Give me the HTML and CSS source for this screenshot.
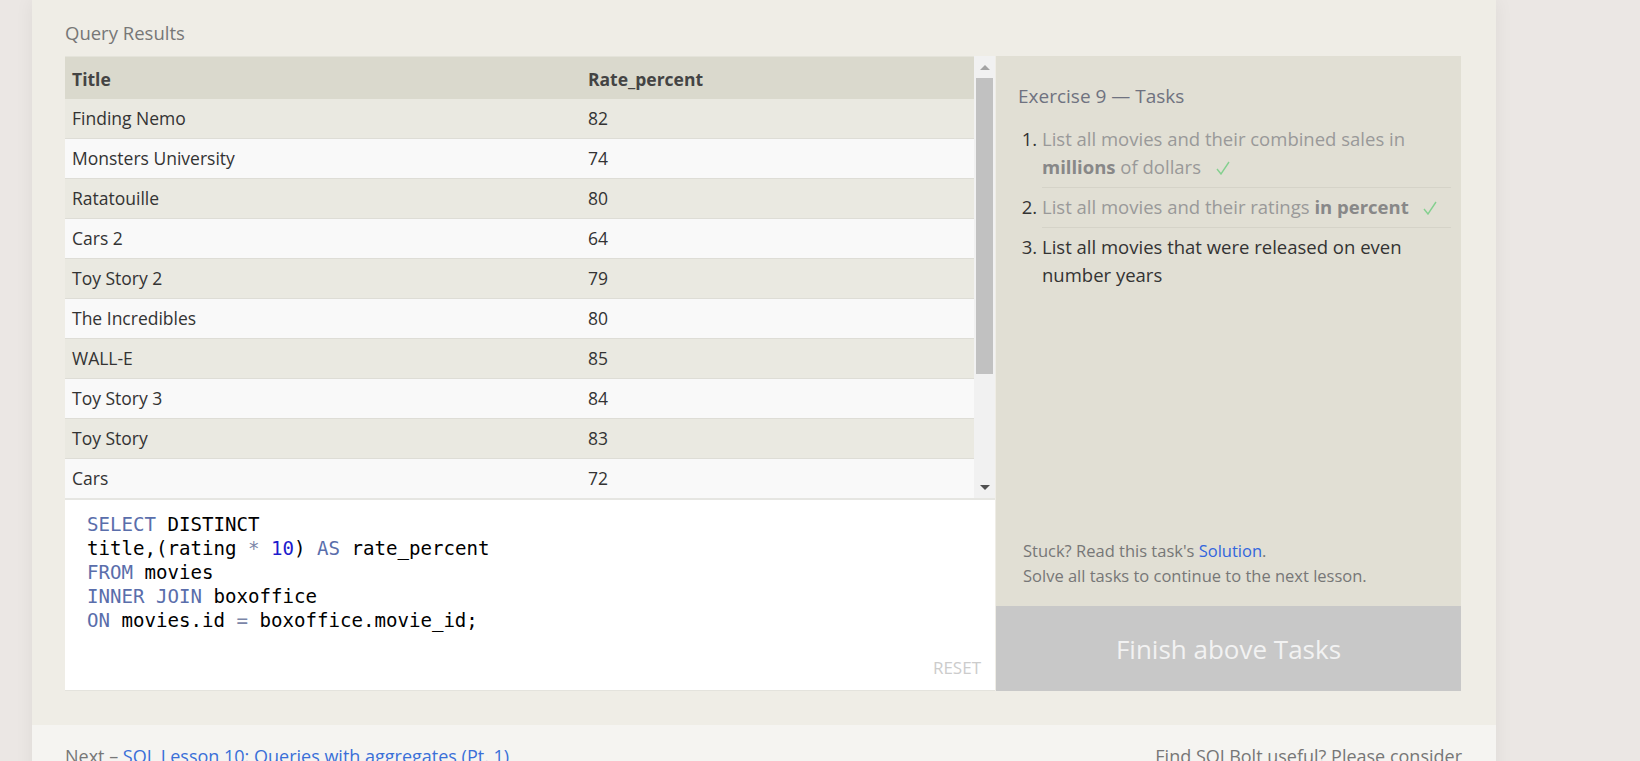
FILE: index.html
```html
<!DOCTYPE html>
<html lang="en">
<head>
<meta charset="utf-8">
<title>SQLBolt - Exercise 9</title>
<link rel="stylesheet" href="styles.css">
</head>
<body>
<div class="page">
  <section class="main">
    <h2 class="results-title">Query Results</h2>
    <div class="workspace">
      <div class="left-col">
        <div class="results">
          <div class="table-wrap">
            <table class="results-table">
              <colgroup><col class="col-title"><col></colgroup>
              <thead>
                <tr><th>Title</th><th>Rate_percent</th></tr>
              </thead>
              <tbody>
                <tr><td>Finding Nemo</td><td>82</td></tr>
                <tr><td>Monsters University</td><td>74</td></tr>
                <tr><td>Ratatouille</td><td>80</td></tr>
                <tr><td>Cars 2</td><td>64</td></tr>
                <tr><td>Toy Story 2</td><td>79</td></tr>
                <tr><td>The Incredibles</td><td>80</td></tr>
                <tr><td>WALL-E</td><td>85</td></tr>
                <tr><td>Toy Story 3</td><td>84</td></tr>
                <tr><td>Toy Story</td><td>83</td></tr>
                <tr><td>Cars</td><td>72</td></tr>
              </tbody>
            </table>
          </div>
          <div class="scrollbar">
            <div class="sb-btn"><span class="arrow-up"></span></div>
            <div class="sb-track"><div class="sb-thumb"></div></div>
            <div class="sb-btn"><span class="arrow-down"></span></div>
          </div>
        </div>
        <div class="editor">
<pre class="code"><span class="kw">SELECT</span> DISTINCT
title,(rating <span class="op">*</span> <span class="num">10</span>) <span class="kw">AS</span> rate_percent
<span class="kw">FROM</span> movies
<span class="kw">INNER JOIN</span> boxoffice
<span class="kw">ON</span> movies.id <span class="op">=</span> boxoffice.movie_id;</pre>
          <div class="editor-foot"><span class="reset">RESET</span></div>
        </div>
      </div>
      <aside class="tasks-panel">
        <div class="tasks">
          <h3 class="tasks-title">Exercise 9 — Tasks</h3>
          <ol class="task-list">
            <li class="done">List all movies and their combined sales in <b>millions</b> of dollars <svg class="check" width="14" height="14" viewBox="0 0 14 14"><polyline points="1,8 5,13 13,1" fill="none" stroke="#84d08f" stroke-width="1.4"/></svg></li>
            <li class="done">List all movies and their ratings <b>in percent</b> <svg class="check" width="14" height="14" viewBox="0 0 14 14"><polyline points="1,8 5,13 13,1" fill="none" stroke="#84d08f" stroke-width="1.4"/></svg></li>
            <li class="current">List all movies that were released on even number years</li>
          </ol>
        </div>
        <div class="hint">
          <p>Stuck? Read this task's <a href="#">Solution</a>.</p>
          <p>Solve all tasks to continue to the next lesson.</p>
        </div>
        <div class="finish">Finish above Tasks</div>
      </aside>
    </div>
  </section>
  <footer class="footer">
    <p class="next">Next – <a href="#">SQL Lesson 10: Queries with aggregates (Pt. 1)</a></p>
    <p class="support">Find SQLBolt useful? Please consider</p>
  </footer>
</div>
</body>
</html>
```

FILE: styles.css
```css
html, body {
  margin: 0;
  padding: 0;
}
body {
  background: #ebe7e4;
  font-family: "Open Sans", "Liberation Sans", sans-serif;
  color: #333;
  height: 761px;
  overflow: hidden;
}
.page {
  width: 1464px;
  margin-left: 32px;
  box-shadow: 0 0 18px rgba(0, 0, 0, 0.06);
}
.main {
  background: #efede6;
  padding: 0 35px 34px 33px;
}
.results-title {
  margin: 0;
  padding: 21px 0 11px;
  font-size: 18.5px;
  line-height: 24px;
  font-weight: normal;
  color: #777;
}
.workspace {
  display: flex;
  gap: 1px;
  height: 635px;
}
.left-col {
  width: 930px;
  display: flex;
  flex-direction: column;
}
.results {
  display: flex;
  height: 442px;
  border-bottom: 2px solid #e6e6e2;
}
.table-wrap {
  width: 909px;
  overflow: hidden;
  background: #f9f9f9;
}
.results-table {
  width: 100%;
  border-collapse: separate;
  border-spacing: 0;
  table-layout: fixed;
  font-size: 17.5px;
  line-height: 23px;
}
.col-title {
  width: 516px;
}
.results-table th {
  text-align: left;
  font-weight: bold;
  background: #dad9cd;
  color: #444;
  padding: 11px 7px 8px;
  border-top: 1px solid #e4e3da;
}
.results-table td {
  padding: 8px 7px;
  border-bottom: 1px solid #deddd6;
  color: #333;
}
.results-table tbody tr:nth-child(odd) td {
  background: #eae9e1;
}
.results-table tbody tr:nth-child(even) td {
  background: #f9f9f9;
}
.scrollbar {
  width: 21px;
  background: #f1f1f1;
  display: flex;
  flex-direction: column;
}
.sb-btn {
  height: 22px;
  display: flex;
  align-items: center;
  justify-content: center;
  padding-left: 1px;
}
.arrow-up {
  width: 0;
  height: 0;
  border-left: 5px solid transparent;
  border-right: 5px solid transparent;
  border-bottom: 5px solid #a3a3a3;
}
.arrow-down {
  width: 0;
  height: 0;
  border-left: 5px solid transparent;
  border-right: 5px solid transparent;
  border-top: 5px solid #505050;
}
.sb-track {
  flex: 1;
  padding: 0 2px;
}
.sb-thumb {
  height: 296px;
  background: #c1c1c1;
}
.editor {
  flex: 1;
  background: #fff;
  display: flex;
  flex-direction: column;
  border-bottom: 1px solid #e4e3dd;
}
.code {
  flex: 1;
  margin: 0;
  padding: 13px 0 0 22px;
  font-family: "DejaVu Sans Mono", "Liberation Mono", monospace;
  font-size: 19.1px;
  line-height: 24px;
  color: #000;
}
.kw {
  color: #5a6eab;
}
.num {
  color: #1c1ccd;
}
.op {
  color: #7b86a8;
}
.editor-foot {
  display: flex;
  justify-content: flex-end;
  padding: 0 14px 10px 0;
}
.reset {
  font-size: 17px;
  line-height: 24px;
  color: #ccc;
}
.tasks-panel {
  width: 465px;
  background: #e1dfd4;
  display: flex;
  flex-direction: column;
}
.tasks {
  flex: 1;
  padding: 26px 10px 0 22px;
}
.tasks-title {
  margin: 0;
  font-size: 19px;
  line-height: 28px;
  font-weight: normal;
  color: #6f7280;
}
.task-list {
  margin: 10px 0 0;
  padding-left: 24px;
  font-size: 18.5px;
  line-height: 28px;
}
.task-list li {
  padding: 5px 0 6px;
  border-bottom: 1px solid #d5d3c8;
}
.task-list li:last-child {
  border-bottom: none;
}
.task-list li::marker {
  color: #333;
}
.task-list li.done {
  color: #999;
}
.task-list li.done b {
  color: #888;
}
.task-list li.current {
  color: #333;
}
.check {
  margin-left: 10px;
  vertical-align: -1px;
}
.hint {
  padding: 0 10px 18px 27px;
  font-size: 16.5px;
  line-height: 25px;
  color: #777;
}
.hint p {
  margin: 0;
}
.hint a {
  color: #3366dd;
  text-decoration: none;
}
.finish {
  height: 85px;
  background: #c8c8c8;
  color: #f2f2f2;
  font-size: 26px;
  display: flex;
  align-items: center;
  justify-content: center;
}
.footer {
  background: #f5f4f1;
  display: flex;
  justify-content: space-between;
  padding: 19px 34px 20px 33px;
  font-size: 18px;
  line-height: 24px;
  color: #777;
}
.footer p {
  margin: 0;
}
.footer a {
  color: #3a6fd8;
  text-decoration: none;
}
```
